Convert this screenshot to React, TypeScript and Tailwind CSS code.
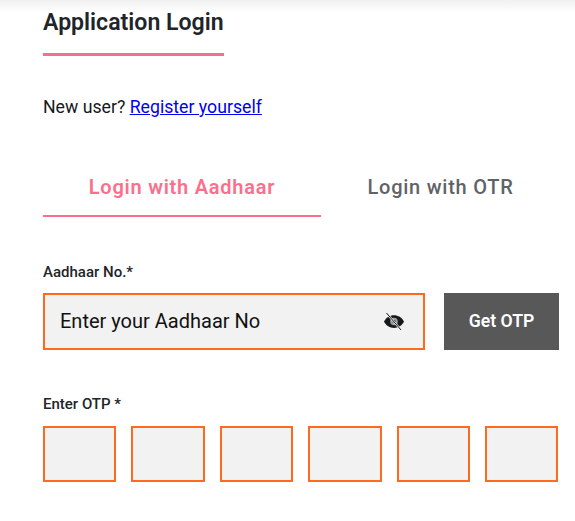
const otpBoxes = [0, 1, 2, 3, 4, 5];

function EyeOff() {
  return (
    <svg viewBox="0 0 20 17" className="h-[17px] w-[20px]">
      <path d="M0 8.5C4 0 16 0 20 8.5C16 17 4 17 0 8.5Z" fill="#16181b" />
      <circle cx="10" cy="8.5" r="3.8" fill="#9a9c9e" />
      <circle cx="10" cy="8.5" r="1.6" fill="#16181b" />
      <line x1="2.5" y1="0" x2="17" y2="17" stroke="#f2f2f2" strokeWidth="2" />
      <line x1="2.5" y1="0" x2="17" y2="17" stroke="#16181b" strokeWidth="1" />
    </svg>
  );
}

export default function App() {
  return (
    <div className="relative h-[521px] w-[575px] overflow-hidden bg-white font-['Roboto',sans-serif]">
      <div className="absolute inset-x-0 top-0 h-[12px] bg-gradient-to-b from-[#f0f0f0] to-white" />
      <div className="relative pl-[43px] pr-[16px]">
        {/* Heading */}
        <div className="pt-[8px]">
          <h1 className="inline-block border-b-[3px] border-[#f4718d] pb-[15px] text-[23.1px] leading-[30px] font-semibold text-[#212529]">
            Application Login
          </h1>
        </div>
        <p className="mt-[38px] text-[17.7px] leading-[27px] text-[#16181b]">
          New user?{' '}
          <a href="#" className="text-[#0000ee] underline">
            Register yourself
          </a>
        </p>

        {/* Tabs */}
        <div className="mt-[46px] flex">
          <button className="h-[50px] w-[278px] border-b-2 border-[#fb6f8c] pb-[8px] text-[20px] font-semibold tracking-[0.75px] text-[#fb6f8c]">
            Login with Aadhaar
          </button>
          <button className="h-[50px] w-[238px] pb-[10px] pl-[1px] text-[20px] font-medium tracking-[0.75px] text-[#5f6368]">
            Login with OTR
          </button>
        </div>

        {/* Aadhaar */}
        <label className="mt-[45px] block text-[15px] leading-[21px] font-medium text-[#212529]">Aadhaar No.*</label>
        <div className="mt-[10px] flex gap-[19px]">
          <div className="flex h-[57px] w-[382px] items-center justify-between border-2 border-[#ff6a1f] bg-[#f2f2f2] pl-[15px] pr-[19px]">
            <span className="pb-[2px] text-[20px] text-[#111]">Enter your Aadhaar No</span>
            <EyeOff />
          </div>
          <button className="h-[57px] w-[115px] bg-[#585858] text-[17.6px] font-semibold text-white">Get OTP</button>
        </div>

        {/* OTP */}
        <label className="mt-[44px] block text-[15px] leading-[21px] font-medium text-[#212529]">Enter OTP *</label>
        <div className="mt-[11px] flex gap-[15px]">
          {otpBoxes.map((i) => (
            <div key={i} className="h-[56px] w-[73.4px] border-2 border-[#ff6a1f] bg-[#f2f2f2]" />
          ))}
        </div>
      </div>
    </div>
  );
}
